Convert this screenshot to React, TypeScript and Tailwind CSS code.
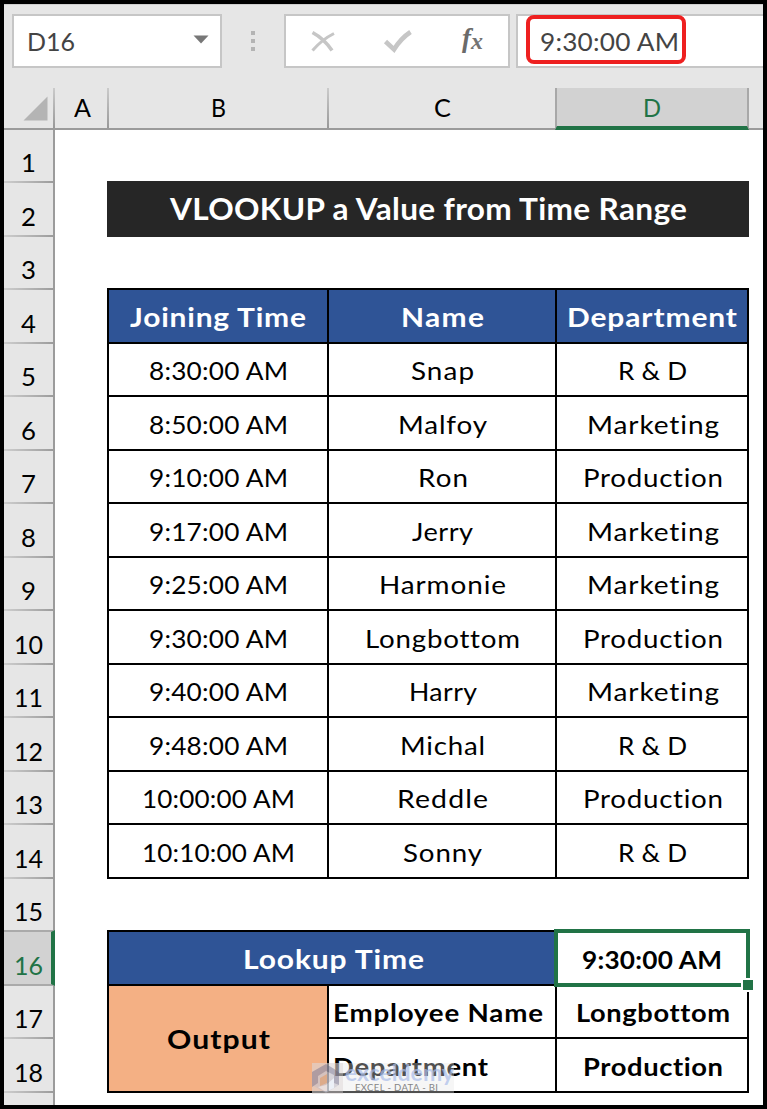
import { useLayoutEffect, useRef, type ReactNode } from "react";

/** Single line of text set to a given advance width: lightly tracked and widened when short, condensed when long. */
function Fit({ w, children }: { w: number; children: string | number }) {
  const ref = useRef<HTMLSpanElement>(null);
  const gaps = String(children).length;
  useLayoutEffect(() => {
    const el = ref.current;
    if (!el) return;
    el.style.letterSpacing = "0px";
    el.style.transform = "none";
    const natural = el.getBoundingClientRect().width;
    const spare = Math.max(0, w - natural) * 0.35;
    el.style.letterSpacing = `${spare / Math.max(1, gaps - 1)}px`;
    el.style.transform = `scaleX(${w / (natural + spare)})`;
  }, [w, gaps]);
  return (
    <span className="inline-flex shrink-0 justify-start" style={{ width: w }}>
      <span ref={ref} className="inline-block shrink-0 origin-left whitespace-nowrap">
        {children}
      </span>
    </span>
  );
}

type Item = [string, number];

const records: [Item, Item, Item][] = [
  [["8:30:00 AM", 139], ["Snap", 63], ["R & D", 69]],
  [["8:50:00 AM", 139], ["Malfoy", 89], ["Marketing", 132]],
  [["9:10:00 AM", 139], ["Ron", 50], ["Production", 140]],
  [["9:17:00 AM", 139], ["Jerry", 61], ["Marketing", 132]],
  [["9:25:00 AM", 139], ["Harmonie", 127], ["Marketing", 132]],
  [["9:30:00 AM", 139], ["Longbottom", 155], ["Production", 140]],
  [["9:40:00 AM", 139], ["Harry", 68], ["Marketing", 132]],
  [["9:48:00 AM", 139], ["Michal", 85], ["R & D", 69]],
  [["10:00:00 AM", 153], ["Reddle", 91], ["Production", 140]],
  [["10:10:00 AM", 153], ["Sonny", 79], ["R & D", 69]],
];

const headings: Item[] = [["Joining Time", 176], ["Name", 83], ["Department", 170]];

const cell = "flex items-center justify-center pt-[2px] outline-2 -outline-offset-1 outline-black";
const columns = "grid grid-cols-[53px_220px_228px_192px_15px]";

function FormulaBar() {
  return (
    <div className="flex h-[84px] items-start border-t border-[#cfcfcf] pt-[9px] pl-2 text-[25.5px] text-[#444444]">
      <div className="flex h-[54px] w-[210px] items-center justify-between border-2 border-[#c6c6c6] bg-white pr-[11px] pl-[13px]">
        <Fit w={48}>D16</Fit>
        <svg width="16" height="9" viewBox="0 0 16 9" className="-mt-[3px]">
          <path d="M0.5 0.5H15.5L8 8.5Z" fill="#777777" />
        </svg>
      </div>
      <div className="mt-[17px] ml-[29px] flex w-[4px] flex-col gap-[4px]">
        <i className="h-[4px] bg-[#b4b4b4]" />
        <i className="h-[4px] bg-[#b4b4b4]" />
        <i className="h-[4px] bg-[#b4b4b4]" />
      </div>
      <div className="ml-[29px] flex h-[54px] w-[226px] items-start border-2 border-[#c6c6c6] bg-white">
        <svg width="222" height="50" viewBox="0 0 222 50">
          <path d="M26.5 16.5C33 20 41 27 46 34.5" stroke="#c6c6c6" strokeWidth="3.6" fill="none" />
          <path d="M48 17.5C41 21 33 27 26.5 34.5" stroke="#c6c6c6" strokeWidth="3" fill="none" />
          <path d="M99.5 25.5L108 33.5C112 27 117 21 124.5 16" stroke="#c6c6c6" strokeWidth="4.6" fill="none" />
          <text x="176" y="31" fontFamily="Liberation Serif, serif" fontStyle="italic" fontWeight="700" fontSize="27" fill="#6a6a6a">f</text>
          <text x="185" y="33" fontFamily="Liberation Serif, serif" fontStyle="italic" fontWeight="700" fontSize="24" fill="#737373">x</text>
        </svg>
      </div>
      <div className="relative ml-[6px] flex h-[54px] flex-1 items-center border-2 border-r-0 border-[#c6c6c6] bg-white pl-[22px]">
        <Fit w={139}>9:30:00 AM</Fit>
        <div className="absolute top-[-1px] left-[8px] h-[49px] w-[160px] rounded-[8px] border-4 border-[#ee2020]" />
      </div>
    </div>
  );
}

function ColumnHeader() {
  const line = "border-r-2 border-transparent [border-image:linear-gradient(#cccccc,#979797)_1]";
  const label = "flex items-center justify-center";
  return (
    <div className="flex h-[39.5px] text-[25px] text-black">
      <div className={`flex w-[51px] items-end justify-end pr-[5px] pb-[7px] ${line}`}>
        <svg width="25" height="25" viewBox="0 0 25 25">
          <path d="M0.5 24.5H24.5V0.5Z" fill="#b4b4b4" />
        </svg>
      </div>
      <div className={`w-[54px] pl-[2px] ${label} ${line}`}><Fit w={17}>A</Fit></div>
      <div className={`w-[220px] ${label} ${line}`}><Fit w={15}>B</Fit></div>
      <div className={`w-[226px] ${label}`}><Fit w={17}>C</Fit></div>
      <div className="relative z-10 flex h-[41.5px] w-[194px] items-center justify-center border-x-2 border-b-[4px] border-x-[#a8a8a8] border-b-[#217346] bg-[#d2d2d2] pt-[2px] text-[#217346]">
        <Fit w={18}>D</Fit>
      </div>
    </div>
  );
}

function RowHeader() {
  const rows = Array.from({ length: 18 }, (_, i) => i + 1);
  return (
    <div className="w-[51px] shrink-0 border-t-2 border-r-2 border-[#9b9b9b] bg-[#e6e6e6] text-[25.5px]">
      {rows.map((n) => (
        <div
          key={n}
          className={
            n === 16
              ? "-mt-[2px] -mr-[2px] flex h-[55.5px] items-center justify-center border-t-2 border-r-4 border-b-2 border-t-[#aaaaaa] border-r-[#217346] border-b-[#aaaaaa] bg-[#d2d2d2] pt-[14px] pl-[2px] text-[#217346]"
              : "flex h-[53.5px] items-center justify-center border-b-2 border-transparent pt-[14px] text-black [border-image:linear-gradient(90deg,#cfcfcf,#9b9b9b)_1]"
          }
        >
          <Fit w={n < 10 ? 15 : 29}>{n}</Fit>
        </div>
      ))}
    </div>
  );
}

function Watermark() {
  return (
    <div className="absolute top-[933px] left-[257px] z-20 flex h-[31px] w-[142px] bg-[#e4e4e4]/35">
      <svg width="31" height="31" viewBox="0 0 31 31" opacity="0.65" className="shrink-0">
        <path d="M0 0H31V31H0Z" fill="#d8d0d0" opacity="0.6" />
        <path d="M0 9L14 1L27 9V22L14 30L0 22Z" fill="#c8c2cc" />
        <path d="M0 9L14 1L27 9V22L22 20V12L14 8L6 13V20L0 24Z" fill="#8d899f" />
        <path d="M8 15L15 11V20L8 23Z" fill="#d4a07c" />
        <path d="M14 22L22 15V25L14 29L6 24Z" fill="#e8edf8" />
      </svg>
      <div className="flex flex-col pl-[2px]">
        <span className="-mt-[2px] h-[23px] text-[23px] leading-[23px] font-bold text-[#a9bdea]/70"><Fit w={109}>exceldemy</Fit></span>
        <span className="pl-[10px] text-[8.5px] leading-[9px] text-[#858585]"><Fit w={83}>EXCEL - DATA - BI</Fit></span>
      </div>
    </div>
  );
}

function Sheet() {
  return (
    <div className="relative w-[708px] border-t-2 border-[#9b9b9b] bg-white text-[25.5px] text-black">
      <div className="-mt-px">
        <div className="h-[53.5px]" />
        <div className={`${columns} h-[53.5px]`}>
          <div className="col-start-2 col-end-5 -m-px flex items-center justify-center bg-[#262626] pl-px text-[30.5px] font-bold text-white">
            <Fit w={517}>VLOOKUP a Value from Time Range</Fit>
          </div>
        </div>
        <div className="h-[53.5px]" />
        <div className={`${columns} h-[53.5px] text-[27.5px] font-bold text-white`}>
          <div />
          {headings.map(([text, w]) => (
            <div key={text} className={`${cell} bg-[#2f5496]`}><Fit w={w}>{text}</Fit></div>
          ))}
        </div>
        {records.map((record) => (
          <div key={record[0][0]} className={`${columns} h-[53.5px]`}>
            <div />
            {record.map(([text, w]) => (
              <div key={text} className={`${cell} pl-px`}><Fit w={w}>{text}</Fit></div>
            ))}
          </div>
        ))}
        <div className="h-[53.5px]" />
        <div className={`${columns} grid-rows-[53.5px_53.5px_53.5px] font-bold`}>
          <div className="row-span-3" />
          <div className={`${cell} col-span-2 bg-[#2f5496] pl-[3px] text-[27.5px] text-white`}><Fit w={181}>Lookup Time</Fit></div>
          <div className="relative z-10 flex items-center justify-center bg-white pt-[2px] outline-4 -outline-offset-2 outline-[#217346]">
            <Fit w={140}>9:30:00 AM</Fit>
            <i className="absolute -right-[7px] -bottom-[7px] size-[14px] border-2 border-white bg-[#217346]" />
          </div>
          <div className="row-span-3" />
          <div className={`${cell} row-span-2 bg-[#f4b084] text-[27.5px]`}><Fit w={103}>Output</Fit></div>
          <div className={`${cell} justify-start pl-[5px]`}><Fit w={210}>Employee Name</Fit></div>
          <div className={`${cell} pl-px`}><Fit w={154}>Longbottom</Fit></div>
          <div className={`${cell} justify-start pl-[5px]`}><Fit w={155}>Department</Fit></div>
          <div className={`${cell} pl-px`}><Fit w={140}>Production</Fit></div>
        </div>
        <Watermark />
      </div>
    </div>
  );
}

function Frame({ children }: { children: ReactNode }) {
  return (
    <div className="h-[1109px] w-[767px] overflow-hidden bg-black p-1 font-['Lato','Carlito',sans-serif] [font-variant-ligatures:none]">
      <div className="flex h-[1101px] w-[759px] flex-col overflow-hidden bg-[#e6e6e6]">{children}</div>
    </div>
  );
}

export default function App() {
  return (
    <Frame>
      <FormulaBar />
      <ColumnHeader />
      <div className="flex flex-1">
        <RowHeader />
        <Sheet />
      </div>
    </Frame>
  );
}
